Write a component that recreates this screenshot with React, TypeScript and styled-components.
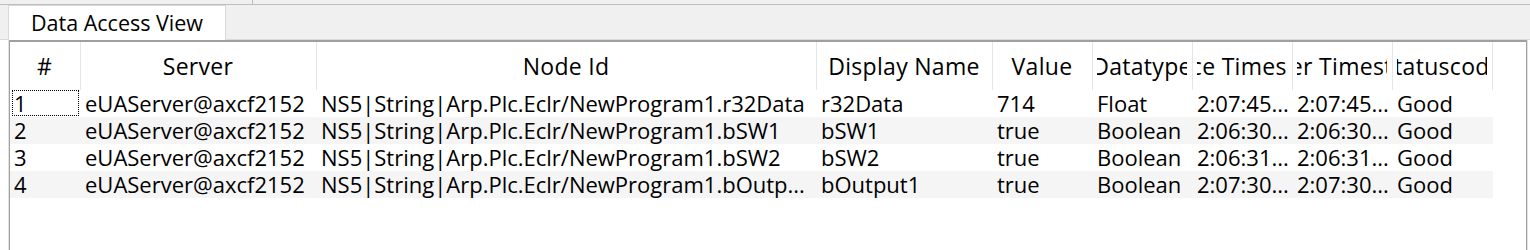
import React from 'react';
import styled, { createGlobalStyle } from 'styled-components';

const GlobalStyle = createGlobalStyle`
  html, body {
    margin: 0;
    padding: 0;
    background: #ffffff;
  }
  body {
    font-family: "Open Sans", "Noto Sans", sans-serif;
    color: #000000;
  }
`;

interface Column {
  title: string;
  width: number;
}

const columns: Column[] = [
  { title: '#', width: 71 },
  { title: 'Server', width: 236 },
  { title: 'Node Id', width: 500 },
  { title: 'Display Name', width: 176 },
  { title: 'Value', width: 100 },
  { title: 'Datatype', width: 100 },
  { title: 'Source Timestamp', width: 100 },
  { title: 'Server Timestamp', width: 100 },
  { title: 'Statuscode', width: 100 },
];

const rows: string[][] = [
  ['1', 'eUAServer@axcf2152', 'NS5|String|Arp.Plc.Eclr/NewProgram1.r32Data', 'r32Data', '714', 'Float', '2:07:45...', '2:07:45...', 'Good'],
  ['2', 'eUAServer@axcf2152', 'NS5|String|Arp.Plc.Eclr/NewProgram1.bSW1', 'bSW1', 'true', 'Boolean', '2:06:30...', '2:06:30...', 'Good'],
  ['3', 'eUAServer@axcf2152', 'NS5|String|Arp.Plc.Eclr/NewProgram1.bSW2', 'bSW2', 'true', 'Boolean', '2:06:31...', '2:06:31...', 'Good'],
  ['4', 'eUAServer@axcf2152', 'NS5|String|Arp.Plc.Eclr/NewProgram1.bOutp...', 'bOutput1', 'true', 'Boolean', '2:07:30...', '2:07:30...', 'Good'],
];

const App = () => {
  return (
    <>
      <GlobalStyle />
      <Window>
        <TopBar>
          <SplitPane />
        </TopBar>
        <TabStrip>
          <Tab>Data Access View</Tab>
        </TabStrip>
        <ListFrame>
          <ListBox>
            <HeaderRow>
              {columns.map((col) => (
                <HeaderCell key={col.title} $width={col.width}>
                  <HeaderLabel>{col.title}</HeaderLabel>
                </HeaderCell>
              ))}
            </HeaderRow>
            {rows.map((row, r) => (
              <Row key={row[0]} $alt={r % 2 === 1}>
                {row.map((value, c) => (
                  <Cell key={c} $width={columns[c].width} $focused={r === 0 && c === 0}>
                    {value}
                  </Cell>
                ))}
              </Row>
            ))}
          </ListBox>
        </ListFrame>
      </Window>
    </>
  );
};

const Window = styled.div`
  width: 1530px;
  height: 250px;
  display: flex;
  flex-direction: column;
  overflow: hidden;
  background: #ffffff;
  font-size: 22px;
`;

const TopBar = styled.div`
  height: 4px;
  background: #f0f0f0;
  border-bottom: 1px solid #bdbdbd;
  display: flex;
`;

const SplitPane = styled.div`
  width: 252px;
  border-right: 1px solid #bdbdbd;
`;

const TabStrip = styled.div`
  height: 34px;
  background: #f0f0f0;
  border-bottom: 1px solid #dadada;
  padding-left: 8px;
  display: flex;
  align-items: flex-start;
`;

const Tab = styled.div`
  box-sizing: border-box;
  width: 218px;
  height: 35px;
  background: #ffffff;
  border: 1px solid #d9d9d9;
  border-bottom: none;
  display: flex;
  align-items: center;
  justify-content: center;
  padding-bottom: 1px;
  font-size: 21.5px;
  white-space: nowrap;
`;

const ListFrame = styled.div`
  flex: 1;
  margin: 0 2px 0 8px;
  border-left: 1px solid #e3e3e3;
  border-right: 1px solid #e3e3e3;
  display: flex;
`;

const ListBox = styled.div`
  flex: 1;
  border-top: 2px solid #a0a0a0;
  border-left: 1px solid #a0a0a0;
  border-right: 1px solid #a0a0a0;
`;

const HeaderRow = styled.div`
  display: flex;
  height: 48px;
`;

const HeaderCell = styled.div<{ $width: number }>`
  box-sizing: border-box;
  width: ${(p) => p.$width}px;
  flex: none;
  padding: 0 5px 1px 4px;
  border-right: 1px solid #e5e5e5;
  display: flex;
  align-items: stretch;
`;

const HeaderLabel = styled.div`
  flex: 1;
  min-width: 0;
  display: flex;
  align-items: center;
  justify-content: center;
  overflow: hidden;
  white-space: nowrap;
  font-size: 23px;
  letter-spacing: 0.3px;
`;

const Row = styled.div<{ $alt: boolean }>`
  display: flex;
  width: 1483px;
  height: 27px;
  background: ${(p) => (p.$alt ? '#f5f5f5' : 'transparent')};
`;

const Cell = styled.div<{ $width: number; $focused: boolean }>`
  box-sizing: border-box;
  position: relative;
  width: ${(p) => p.$width}px;
  flex: none;
  padding-left: 4px;
  line-height: 27px;
  overflow: hidden;
  white-space: nowrap;

  &::before {
    content: '';
    display: ${(p) => (p.$focused ? 'block' : 'none')};
    position: absolute;
    inset: 0 2px 1px 2px;
    border: 1px dotted #000000;
  }
`;

export default App;
